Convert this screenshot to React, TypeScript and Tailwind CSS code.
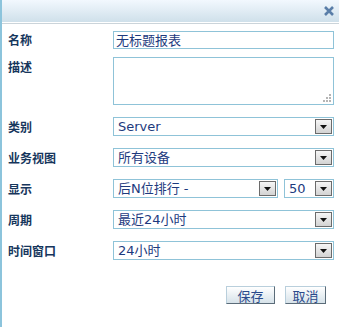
import { ReactNode } from "react";

const fieldFont = { fontFamily: '"DejaVu Sans", "Noto Sans CJK SC", sans-serif' };
const labelFont = { fontFamily: '"Noto Sans CJK SC", "DejaVu Sans", sans-serif' };

function Arrow() {
  return (
    <div className="absolute right-[1px] top-[1px] bottom-[1px] w-[17px] border border-[#6b6b6b] bg-gradient-to-b from-[#f6f6f6] to-[#d3d3d3] flex items-center justify-center">
      <svg width="7" height="4" viewBox="0 0 7 4">
        <polygon points="0,0 7,0 3.5,4" fill="#111" />
      </svg>
    </div>
  );
}

function Select({ value, className = "" }: { value: string; className?: string }) {
  return (
    <div
      className={`relative h-[19px] border border-[#8fc3d8] bg-white text-[13px] leading-[17px] text-[#1d3a7e] pl-[4px] ${className}`}
      style={fieldFont}
    >
      {value}
      <Arrow />
    </div>
  );
}

function Row({ label, children, top = false, className = "" }: { label: string; children: ReactNode; top?: boolean; className?: string }) {
  return (
    <div className={`flex ${top ? "items-start" : "items-center"} ${className}`}>
      <div
        className={`w-[111px] pl-[6px] text-[12px] font-bold text-[#16365c] ${top ? "pt-[1px]" : ""}`}
        style={labelFont}
      >
        {label}
      </div>
      <div className="flex-1 pr-[5px]">{children}</div>
    </div>
  );
}

export default function App() {
  return (
    <div className="w-[339px] h-[327px] bg-white border-l-2 border-[#8cc4dc] overflow-hidden">
      <div className="h-[22px] bg-gradient-to-b from-[#f2f8fe] to-[#cfe0ea] flex items-center justify-end pr-[5px]">
        <svg width="10" height="10" viewBox="0 0 10 10">
          <path d="M1 1 L9 9 M9 1 L1 9" stroke="#5a7ea8" strokeWidth="2.6" />
        </svg>
      </div>
      <div className="h-[1px] bg-white" />
      <div className="h-[1px] bg-[#cbd4da]" />

      <div className="pt-[7px]">
        <Row label="名称">
          <div
            className="h-[18px] border border-[#8fc3d8] text-[13px] leading-[16px] text-[#1d3a7e] pl-[2px]"
            style={labelFont}
          >
            无标题报表
          </div>
        </Row>

        <Row label="描述" top className="mt-[8px]">
          <div className="relative h-[48px] border border-[#8fc3d8]">
            <svg className="absolute right-[2px] bottom-[2px]" width="8" height="8" viewBox="0 0 8 8">
              <rect x="6" y="0" width="2" height="2" fill="#b5b5b5" />
              <rect x="3" y="3" width="2" height="2" fill="#b5b5b5" />
              <rect x="6" y="3" width="2" height="2" fill="#b5b5b5" />
              <rect x="0" y="6" width="2" height="2" fill="#b5b5b5" />
              <rect x="3" y="6" width="2" height="2" fill="#b5b5b5" />
              <rect x="6" y="6" width="2" height="2" fill="#b5b5b5" />
            </svg>
          </div>
        </Row>

        <Row label="类别" className="mt-[12px]">
          <Select value="Server" />
        </Row>

        <Row label="业务视图" className="mt-[12px]">
          <Select value="所有设备" />
        </Row>

        <Row label="显示" className="mt-[12px]">
          <div className="flex gap-[6px]">
            <Select value="后N位排行 -" className="w-[165px]" />
            <Select value="50" className="flex-1" />
          </div>
        </Row>

        <Row label="周期" className="mt-[12px]">
          <Select value="最近24小时" />
        </Row>

        <Row label="时间窗口" className="mt-[12px]">
          <Select value="24小时" />
        </Row>

        <div className="mt-[26px] flex justify-end gap-[10px] pr-[13px]" style={labelFont}>
          <button className="w-[49px] h-[18px] border border-[#b9cfdc] border-r-[#5b6c79] border-b-[#5b6c79] bg-gradient-to-b from-[#ffffff] to-[#d6e2e9] text-[13px] leading-[15px] text-[#2a4a8c]">
            保存
          </button>
          <button className="w-[41px] h-[18px] border border-[#b9cfdc] border-r-[#5b6c79] border-b-[#5b6c79] bg-gradient-to-b from-[#ffffff] to-[#d6e2e9] text-[13px] leading-[15px] text-[#2a4a8c]">
            取消
          </button>
        </div>
      </div>
    </div>
  );
}
